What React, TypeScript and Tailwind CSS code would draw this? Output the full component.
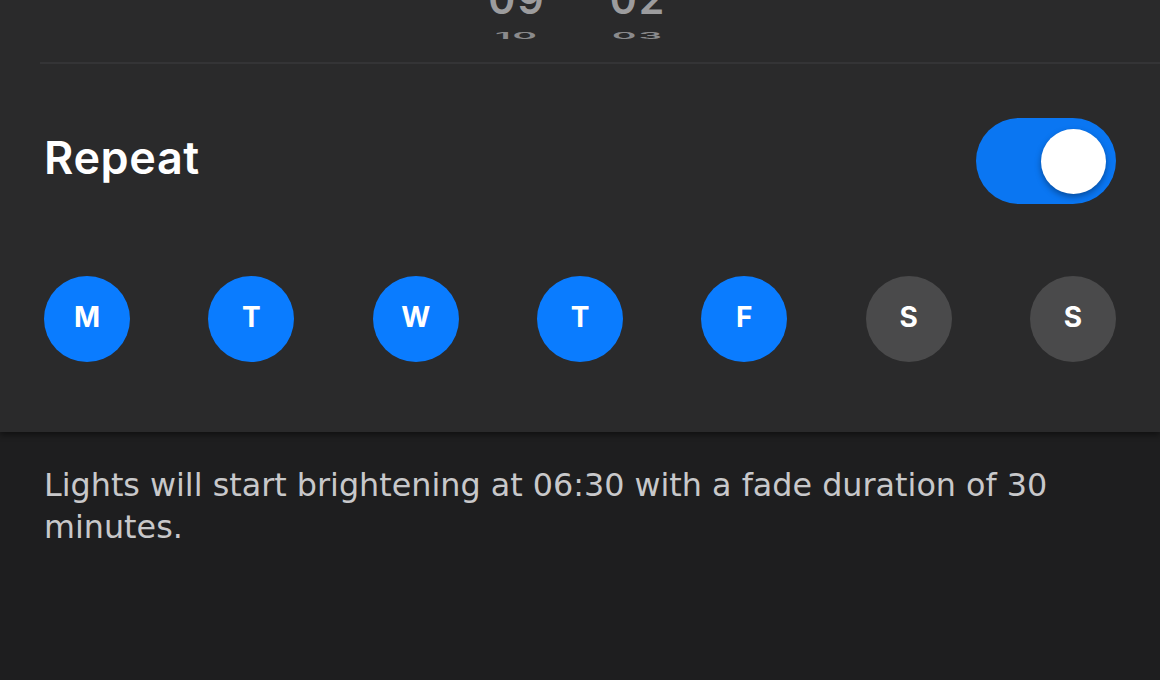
import React from "react";

const days = [
  { label: "M", on: true },
  { label: "T", on: true },
  { label: "W", on: true },
  { label: "T", on: true },
  { label: "F", on: true },
  { label: "S", on: false },
  { label: "S", on: false },
];

function Wheel({ top, next }: { top: string; next: string }) {
  return (
    <div className="flex w-[70px] flex-col items-center">
      <span className="mt-[-22px] text-[41px] font-semibold leading-[42px] tracking-[2px] text-[#9c9c9e]">
        {top}
      </span>
      <span className="mt-[11px] origin-top scale-y-[0.25] text-[37px] font-semibold leading-[38px] tracking-[2px] text-[#8a8a8c]">
        {next}
      </span>
    </div>
  );
}

export default function App() {
  return (
    <div
      className="h-[680px] w-[1160px] overflow-hidden bg-[#1e1e1f]"
      style={{ fontFamily: "Inter, 'Noto Sans', sans-serif" }}
    >
      <section className="relative z-10 bg-[#2a2a2b] px-[44px] pb-[70px] shadow-[0_3px_6px_rgba(0,0,0,0.45)]">
        <div className="ml-[-4px] mr-[-44px] flex h-[64px] justify-start gap-[51px] overflow-hidden border-b-2 border-[#343436] pl-[442px]">
          <Wheel top="09" next="10" />
          <Wheel top="02" next="03" />
        </div>

        <div className="mt-[54px] flex items-center justify-between">
          <h2 className="mt-[-8px] text-[45px] font-semibold leading-none tracking-[0.6px] text-white">
            Repeat
          </h2>
          <div className="flex h-[86px] w-[140px] items-center justify-end rounded-full bg-[#0a76f2] pr-[10px]">
            <div className="h-[65px] w-[65px] rounded-full bg-white shadow-[0_3px_6px_rgba(0,0,0,0.35)]" />
          </div>
        </div>

        <div className="mt-[72px] flex items-center justify-between">
          {days.map((d, i) => (
            <div
              key={i}
              className={`flex h-[86px] w-[86px] items-center justify-center rounded-full pb-[5px] text-[28px] font-bold text-white ${
                d.on ? "bg-[#0a7cff]" : "bg-[#4a4a4b]"
              }`}
            >
              {d.label}
            </div>
          ))}
        </div>
      </section>

      <p
        className="px-[44px] pr-[80px] pt-[32px] text-[31.8px] leading-[42px] text-[#c8c8ca]"
        style={{ fontFamily: "'DejaVu Sans', 'Noto Sans', sans-serif" }}
      >
        Lights will start brightening at 06:30 with a fade duration of 30 minutes.
      </p>
    </div>
  );
}
